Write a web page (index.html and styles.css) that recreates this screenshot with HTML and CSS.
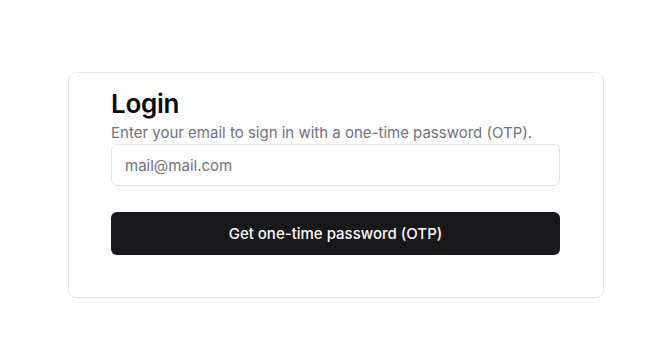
FILE: index.html
```html
<!DOCTYPE html>
<html lang="en">

<head>
    <meta charset="UTF-8">
    <meta name="viewport" content="width=device-width, initial-scale=1.0">
    <title>Login</title>
    <link rel="stylesheet" href="styles.css">
</head>

<body>
    <div class="page">
        <div class="card">
            <h1 class="title">Login</h1>
            <p class="subtitle">Enter your email to sign in with a one-time password (OTP).</p>
            <form class="form">
                <input class="input" type="email" placeholder="mail@mail.com">
                <button class="button" type="button">Get one-time password (OTP)</button>
            </form>
        </div>
    </div>
</body>

</html>
```

FILE: styles.css
```css
html,
body {
    margin: 0;
    height: 100%;
    background: #fff;
}

body {
    font-family: Inter, "Noto Sans", sans-serif;
    color: #09090b;
}

.page {
    display: flex;
    justify-content: center;
    padding: 72px 0 0 2px;
}

.card {
    width: 449px;
    padding: 16px 43px 42px 42px;
    border: 1px solid #e4e4e7;
    border-radius: 8px;
}

.title {
    margin: 0;
    font-size: 26px;
    font-weight: 600;
    line-height: 30px;
    letter-spacing: -0.3px;
}

.subtitle {
    margin: 4px 0 0;
    font-size: 15px;
    line-height: 20px;
    color: #71717a;
}

.form {
    display: flex;
    flex-direction: column;
    gap: 26px;
    margin-top: 1px;
}

.input {
    box-sizing: border-box;
    height: 42px;
    padding: 0 13px;
    border: 1px solid #e4e4e7;
    border-radius: 6px;
    font-family: inherit;
    font-size: 15px;
    color: #09090b;
    outline: none;
}

.input::placeholder {
    color: #71717a;
}

.button {
    height: 43px;
    border: none;
    border-radius: 6px;
    background: #18181b;
    color: #fafafa;
    font-family: inherit;
    font-size: 15px;
    font-weight: 500;
    cursor: pointer;
}
```
